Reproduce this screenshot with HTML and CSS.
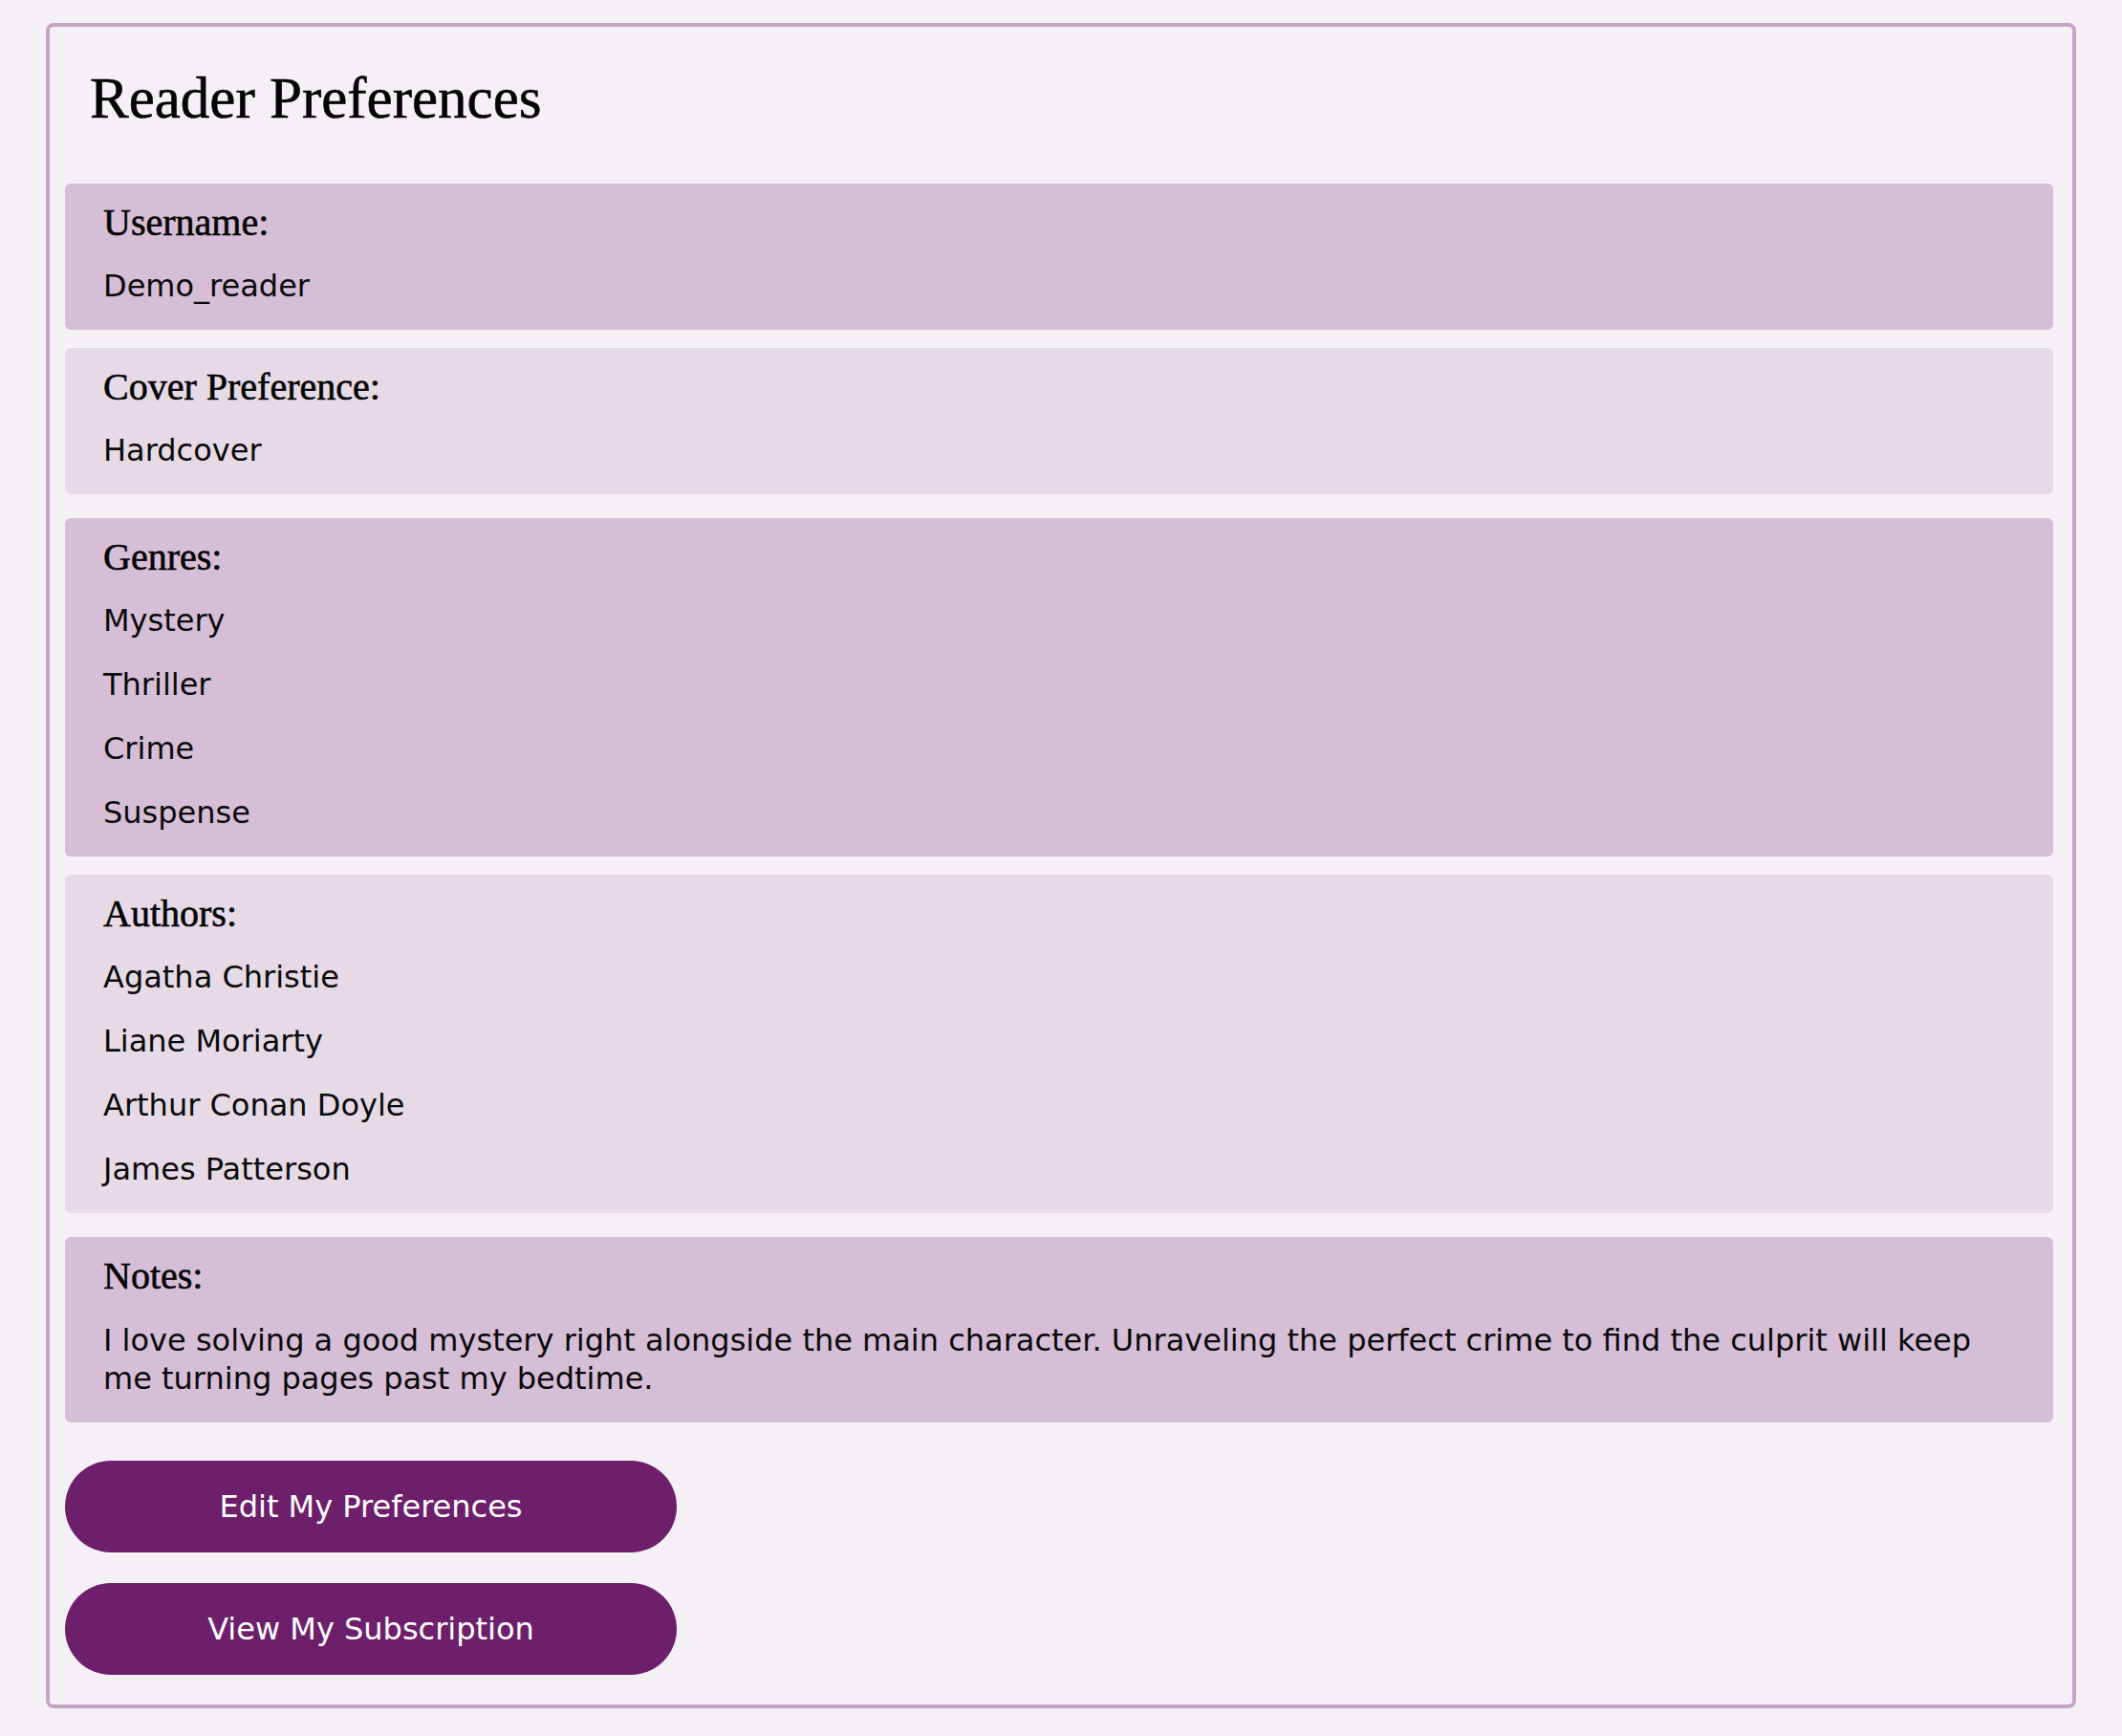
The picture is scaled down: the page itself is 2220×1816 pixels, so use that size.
FILE: index.html
```html
<!DOCTYPE html>
<html lang="en">
<head>
<meta charset="utf-8">
<title>Reader Preferences</title>
<link rel="stylesheet" href="styles.css">
</head>
<body>
<main class="card">
  <h1 class="title">Reader Preferences</h1>

  <section class="field field--dark">
    <h2 class="field-label">Username:</h2>
    <p class="field-value">Demo_reader</p>
  </section>

  <section class="field field--light">
    <h2 class="field-label">Cover Preference:</h2>
    <p class="field-value">Hardcover</p>
  </section>

  <section class="field field--dark">
    <h2 class="field-label">Genres:</h2>
    <ul class="field-list">
      <li class="field-value">Mystery</li>
      <li class="field-value">Thriller</li>
      <li class="field-value">Crime</li>
      <li class="field-value">Suspense</li>
    </ul>
  </section>

  <section class="field field--light">
    <h2 class="field-label">Authors:</h2>
    <ul class="field-list">
      <li class="field-value">Agatha Christie</li>
      <li class="field-value">Liane Moriarty</li>
      <li class="field-value">Arthur Conan Doyle</li>
      <li class="field-value">James Patterson</li>
    </ul>
  </section>

  <section class="field field--dark field--last">
    <h2 class="field-label">Notes:</h2>
    <p class="field-notes">I love solving a good mystery right alongside the main character. Unraveling the perfect crime to find the culprit will keep me turning pages past my bedtime.</p>
  </section>

  <div class="actions">
    <button class="pill-btn" type="button">Edit My Preferences</button>
    <button class="pill-btn" type="button">View My Subscription</button>
  </div>
</main>
</body>
</html>
```

FILE: styles.css
```css
* {
  box-sizing: border-box;
}

html,
body {
  background: #f5f0f6;
}

body {
  margin: 0;
  padding: 24px 48px 29px;
  color: #0a0a0a;
  font-family: "DejaVu Sans", "Liberation Sans", sans-serif;
}

.card {
  border: 4px solid #c6a4c6;
  border-radius: 8px;
  padding: 40px 20px 31px 16px;
  background: #f5f0f6;
}

.title {
  margin: 0 0 55px 26px;
  font-family: "Liberation Serif", "Times New Roman", serif;
  font-size: 61px;
  line-height: 69px;
  font-weight: normal;
  color: #050505;
  -webkit-text-stroke: 0.6px #050505;
}

.field {
  border-radius: 6px;
  padding: 18px 40px 26px;
  margin-bottom: 19px;
}

.field--dark {
  background: #d6bed6;
}

.field--light {
  background: #e6dae7;
  margin-bottom: 25px;
}

.field--last {
  margin-bottom: 40px;
}

.field-label {
  margin: 0 0 24px;
  font-family: "Liberation Serif", "Times New Roman", serif;
  font-size: 40px;
  line-height: 46px;
  font-weight: normal;
  color: #050505;
  -webkit-text-stroke: 0.6px #050505;
}

.field-value {
  margin: 0;
  font-size: 32px;
  line-height: 39px;
  color: #0a0a0a;
}

.field-list {
  list-style: none;
  margin: 0;
  padding: 0;
  display: flex;
  flex-direction: column;
  gap: 28px;
}

.field-notes {
  margin: 0;
  font-size: 32px;
  line-height: 40px;
  color: #0a0a0a;
}

.actions {
  display: flex;
  flex-direction: column;
  align-items: flex-start;
  gap: 32px;
}

.pill-btn {
  width: 640px;
  height: 96px;
  border: none;
  border-radius: 48px;
  background: #6d1f6b;
  color: #ffffff;
  font-family: "DejaVu Sans", "Liberation Sans", sans-serif;
  font-size: 32px;
  line-height: 40px;
  padding: 0;
  cursor: pointer;
}
```
